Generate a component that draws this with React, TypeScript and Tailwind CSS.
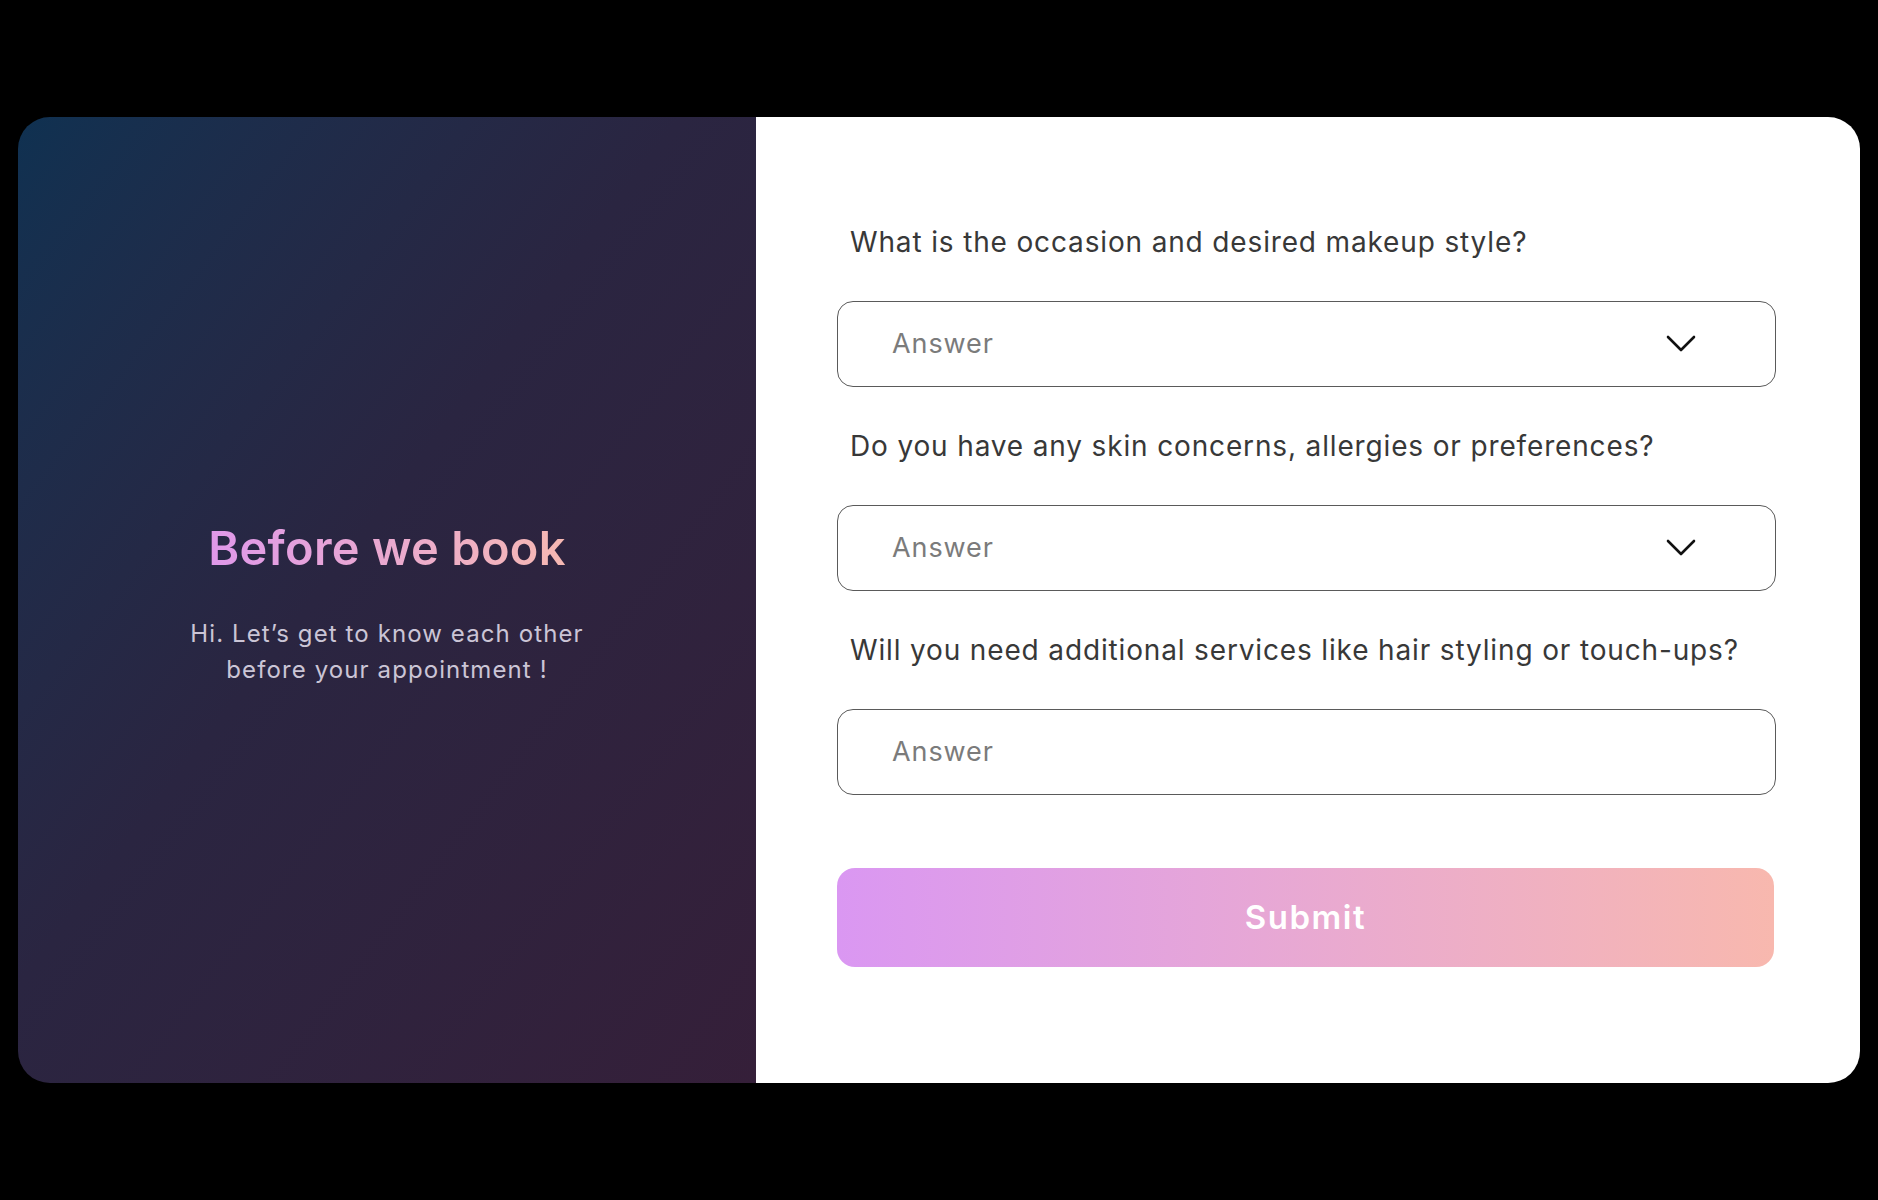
import { ChangeEvent, useState } from "react"

const questions = [
    { label: "What is the occasion and desired makeup style?", select: true },
    { label: "Do you have any skin concerns, allergies or preferences?", select: true },
    { label: "Will you need additional services like hair styling or touch-ups?", select: false },
]

function Chevron() {
    return (
        <svg width="30" height="18" viewBox="0 0 30 18" fill="none" className="shrink-0">
            <polyline points="2,2 15,15 28,2" stroke="#111" strokeWidth="2.6" strokeLinecap="round" strokeLinejoin="round" />
        </svg>
    )
}

export default function App() {
    const [values, setValues] = useState<string[]>(["", "", ""])

    const update = (i: number) => (e: ChangeEvent<HTMLInputElement>) => {
        const next = [...values]
        next[i] = e.target.value
        setValues(next)
    }

    return (
        <div className="w-full min-h-[1200px] bg-black pt-[117px] pl-[18px] font-['Inter','Liberation_Sans',sans-serif]">
            <div className="flex w-[1842px] h-[966px] rounded-[32px] overflow-hidden">
                {/* intro panel */}
                <div className="w-[738px] shrink-0 flex flex-col items-center justify-center pt-[7px] bg-linear-to-br from-[#0f3151] via-[#2a2541] via-45% to-[#351f39]">
                    <h1 className="text-[47px] leading-[56px] font-semibold tracking-[0.3px] bg-linear-to-r from-[#df98ea] to-[#f6b8b2] bg-clip-text text-transparent">
                        Before we book
                    </h1>
                    <p className="mt-[40px] text-[24px] leading-[36px] tracking-[1.1px] text-center text-[#cbc5d6]">
                        Hi. Let’s get to know each other
                        <br />
                        before your appointment !
                    </p>
                </div>

                {/* form panel */}
                <div className="flex-1 bg-white pt-[107px] pl-[81px] pr-[84px]">
                    <div className="flex flex-col">
                        {questions.map((q, i) => (
                            <div key={i} className={i > 0 ? "mt-[41px]" : ""}>
                                <p className="pl-[13px] text-[28px] leading-[36px] tracking-[0.85px] text-[#383838]">{q.label}</p>
                                <div className="mt-[41px] h-[86px] flex items-center rounded-[16px] border border-[#5a5a5a] pl-[54px] pr-[79px]">
                                    {q.select ? (
                                        <>
                                            <span className="flex-1 text-[27px] tracking-[0.9px] text-[#7b7b7b]">Answer</span>
                                            <Chevron />
                                        </>
                                    ) : (
                                        <input
                                            value={values[i]}
                                            onChange={update(i)}
                                            placeholder="Answer"
                                            className="flex-1 bg-transparent outline-none text-[27px] tracking-[0.9px] text-[#333] placeholder:text-[#7b7b7b]"
                                        />
                                    )}
                                </div>
                            </div>
                        ))}
                        <button className="mt-[73px] h-[99px] w-[937px] rounded-[18px] bg-linear-to-r from-[#da97f2] to-[#f8b8ae] text-white text-[33px] tracking-[1.5px] font-semibold">
                            Submit
                        </button>
                    </div>
                </div>
            </div>
        </div>
    )
}
